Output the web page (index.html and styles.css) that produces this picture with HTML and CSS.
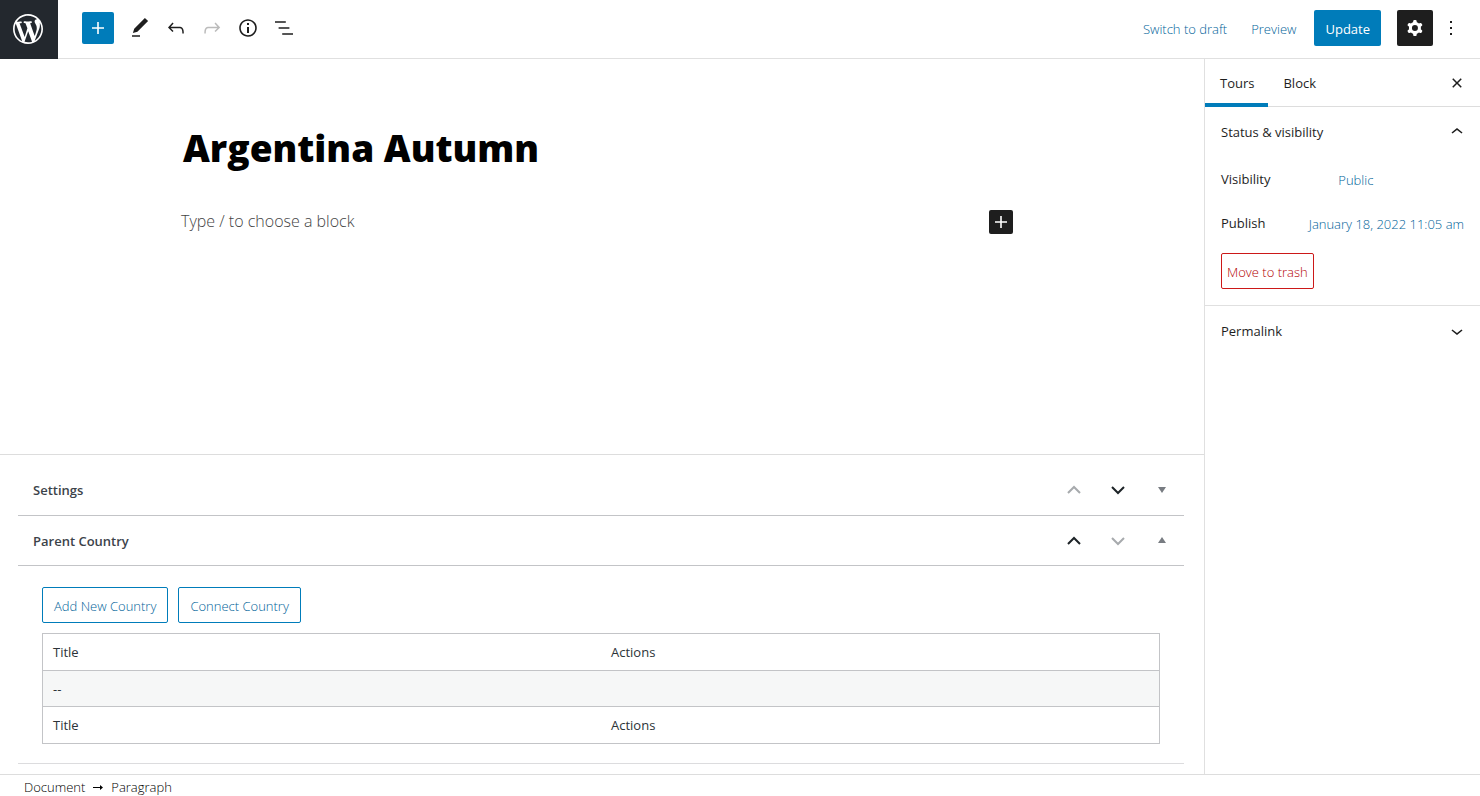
FILE: index.html
```html
<!DOCTYPE html>
<html lang="en">
<head>
  <meta charset="UTF-8">
  <meta name="viewport" content="width=device-width, initial-scale=1.0">
  <title>Edit Tour</title>
  <link rel="stylesheet" href="styles.css">
</head>
<body>
  <!-- Top toolbar -->
  <header class="header">
    <a class="logo" href="#" aria-label="View Posts">
      <svg width="36" height="36" viewBox="-2 -2 24 24"><path d="M20 10c0-5.51-4.49-10-10-10C4.48 0 0 4.49 0 10c0 5.52 4.48 10 10 10 5.51 0 10-4.48 10-10zM7.78 15.37L4.37 6.22c.55-.02 1.17-.08 1.17-.08.5-.06.44-1.13-.06-1.11 0 0-1.45.11-2.37.11-.18 0-.37 0-.58-.01C4.12 2.69 6.87 1.11 10 1.11c2.33 0 4.45.87 6.05 2.34-.68-.11-1.65.39-1.65 1.58 0 .74.45 1.36.9 2.1.35.61.55 1.36.55 2.46 0 1.49-1.4 5-1.4 5l-3.03-8.37c.54-.02.82-.17.82-.17.5-.05.44-1.25-.06-1.22 0 0-1.44.12-2.38.12-.87 0-2.33-.12-2.33-.12-.5-.03-.56 1.2-.06 1.22l.92.08 1.26 3.41zM17.41 10c.24-.64.74-1.87.43-4.25.7 1.29 1.05 2.71 1.05 4.25 0 3.29-1.73 6.24-4.4 7.78.97-2.59 1.94-5.2 2.92-7.78zM6.1 18.09C3.12 16.65 1.11 13.53 1.11 10c0-1.3.23-2.48.72-3.59C3.25 10.3 4.67 14.2 6.1 18.09zm4.03-6.63l2.58 6.98c-.86.29-1.76.45-2.71.45-.79 0-1.57-.11-2.29-.33.81-2.38 1.62-4.74 2.42-7.1z"/></svg>
    </a>
    <div class="tools">
      <button class="tool tool-add" type="button" aria-label="Add block">
        <svg width="24" height="24" viewBox="0 0 24 24"><path d="M18 11.2h-5.2V6h-1.6v5.2H6v1.6h5.2V18h1.6v-5.2H18z"/></svg>
      </button>
      <button class="tool" type="button" aria-label="Tools">
        <svg width="24" height="24" viewBox="0 0 24 24"><path d="M20.1 5.1L16.9 2 6.2 12.7l-1.3 4.4 4.5-1.3L20.1 5.1zM4 20.8h8v-1.5H4v1.5z"/></svg>
      </button>
      <button class="tool" type="button" aria-label="Undo">
        <svg width="24" height="24" viewBox="0 0 24 24"><path d="M18.3 11.7c-.6-.6-1.4-.9-2.3-.9H6.7l2.9-3.3-1.1-1-4.5 5L8.5 16l1-1-2.7-2.7H16c.5 0 .9.2 1.3.5 1 1 1 3.4 1 4.5v.3h1.5v-.2c0-1.5 0-4.3-1.5-5.7z"/></svg>
      </button>
      <button class="tool" type="button" aria-label="Redo" disabled>
        <svg width="24" height="24" viewBox="0 0 24 24"><path d="M15.6 6.5l-1.1 1 2.9 3.3H8c-.9 0-1.7.3-2.3.9-1.4 1.5-1.4 4.2-1.4 5.6v.2h1.5v-.3c0-1.1 0-3.5 1-4.5.3-.3.7-.5 1.3-.5h9.2L14.5 15l1.1 1.1 4.6-4.6-4.6-5z"/></svg>
      </button>
      <button class="tool" type="button" aria-label="Details">
        <svg width="24" height="24" viewBox="0 0 24 24"><path d="M12 3.2c-4.8 0-8.8 3.9-8.8 8.8 0 4.8 3.9 8.8 8.8 8.8 4.8 0 8.8-3.9 8.8-8.8 0-4.8-4-8.8-8.8-8.8zm0 16c-4 0-7.2-3.3-7.2-7.2C4.8 8 8 4.8 12 4.8s7.2 3.3 7.2 7.2c0 4-3.2 7.2-7.2 7.2zM11 17h2v-6h-2v6zm0-8h2V7h-2v2z"/></svg>
      </button>
      <button class="tool" type="button" aria-label="List view">
        <svg width="24" height="24" viewBox="0 0 24 24"><path d="M13.8 5.2H3v1.5h10.8V5.2zm-3.6 12v1.5H21v-1.5H10.2zm7.2-6H6.6v1.5h10.8v-1.5z"/></svg>
      </button>
    </div>
    <div class="actions">
      <button class="link-button" type="button">Switch to draft</button>
      <button class="link-button" type="button">Preview</button>
      <button class="update" type="button">Update</button>
      <button class="settings-toggle" type="button" aria-label="Settings">
        <svg width="24" height="24" viewBox="0 0 24 24"><path fill-rule="evenodd" d="M10.289 4.836A1 1 0 0111.275 4h1.306a1 1 0 01.987.836l.244 1.466c.787.26 1.503.679 2.108 1.218l1.393-.522a1 1 0 011.216.437l.653 1.13a1 1 0 01-.23 1.273l-1.148.944a6.025 6.025 0 010 2.435l1.149.946a1 1 0 01.23 1.272l-.653 1.13a1 1 0 01-1.216.437l-1.394-.522c-.605.54-1.32.958-2.108 1.218l-.244 1.466a1 1 0 01-.987.836h-1.306a1 1 0 01-.986-.836l-.244-1.466a5.995 5.995 0 01-2.108-1.218l-1.394.522a1 1 0 01-1.217-.436l-.653-1.131a1 1 0 01.23-1.272l1.149-.946a6.026 6.026 0 010-2.435l-1.148-.944a1 1 0 01-.23-1.272l.653-1.131a1 1 0 011.217-.437l1.393.522a5.994 5.994 0 012.108-1.218l.244-1.466zM14.929 12a3 3 0 11-6 0 3 3 0 016 0z"/></svg>
      </button>
      <button class="more" type="button" aria-label="Options">
        <svg width="24" height="24" viewBox="0 0 24 24"><path d="M13 19h-2v-2h2v2zm0-6h-2v-2h2v2zm0-6h-2V5h2v2z"/></svg>
      </button>
    </div>
  </header>

  <div class="body">
    <main class="content">
      <!-- Editor canvas -->
      <section class="canvas">
        <h1 class="post-title">Argentina Autumn</h1>
        <div class="block">
          <p class="placeholder">Type / to choose a block</p>
          <button class="inserter" type="button" aria-label="Add block">
            <svg width="24" height="24" viewBox="0 0 24 24"><path d="M18 11.2h-5.2V6h-1.6v5.2H6v1.6h5.2V18h1.6v-5.2H18z"/></svg>
          </button>
        </div>
      </section>

      <!-- Meta boxes -->
      <section class="metaboxes">
        <div class="postbox-header">
          <h2>Settings</h2>
          <button class="handle" type="button" aria-label="Move up" disabled>
            <svg width="20" height="20" viewBox="0 0 20 20"><path class="chevron" d="M4 13l6-6 6 6"/></svg>
          </button>
          <button class="handle" type="button" aria-label="Move down">
            <svg width="20" height="20" viewBox="0 0 20 20"><path class="chevron" d="M4 7l6 6 6-6"/></svg>
          </button>
          <button class="handle handle-toggle" type="button" aria-label="Toggle panel: Settings">
            <svg width="20" height="20" viewBox="0 0 20 20"><path d="M6 7h8l-4 6z"/></svg>
          </button>
        </div>
        <div class="postbox-header">
          <h2>Parent Country</h2>
          <button class="handle" type="button" aria-label="Move up">
            <svg width="20" height="20" viewBox="0 0 20 20"><path class="chevron" d="M4 13l6-6 6 6"/></svg>
          </button>
          <button class="handle" type="button" aria-label="Move down" disabled>
            <svg width="20" height="20" viewBox="0 0 20 20"><path class="chevron" d="M4 7l6 6 6-6"/></svg>
          </button>
          <button class="handle handle-toggle" type="button" aria-label="Toggle panel: Parent Country">
            <svg width="20" height="20" viewBox="0 0 20 20"><path d="M6 12h8l-4-6z"/></svg>
          </button>
        </div>
        <div class="postbox-inside">
          <div class="relation-buttons">
            <button class="outline-button" type="button">Add New Country</button>
            <button class="outline-button" type="button">Connect Country</button>
          </div>
          <table class="relation-table">
            <thead>
              <tr><th scope="col">Title</th><th scope="col">Actions</th></tr>
            </thead>
            <tbody>
              <tr><td colspan="2">--</td></tr>
            </tbody>
            <tfoot>
              <tr><th scope="col">Title</th><th scope="col">Actions</th></tr>
            </tfoot>
          </table>
        </div>
      </section>
    </main>

    <!-- Settings sidebar -->
    <aside class="sidebar">
      <div class="tabs">
        <button class="tab active" type="button">Tours</button>
        <button class="tab" type="button">Block</button>
        <button class="close" type="button" aria-label="Close settings">
          <svg width="24" height="24" viewBox="0 0 24 24"><path d="M12 13.06l3.712 3.713 1.061-1.06L13.061 12l3.712-3.712-1.06-1.06L12 10.938 8.288 7.227l-1.061 1.06L10.939 12l-3.712 3.712 1.06 1.061L12 13.061z"/></svg>
        </button>
      </div>
      <section class="panel">
        <button class="panel-toggle" type="button" aria-expanded="true">
          Status &amp; visibility
          <svg width="24" height="24" viewBox="0 0 24 24"><path d="M6.5 12.4L12 8l5.5 4.4-.9 1.2L12 10l-4.5 3.6-1-1.2z"/></svg>
        </button>
        <div class="panel-body">
          <div class="panel-row">
            <label for="visibility">Visibility</label>
            <button class="value" id="visibility" type="button">Public</button>
          </div>
          <div class="panel-row">
            <label for="publish">Publish</label>
            <button class="value" id="publish" type="button">January 18, 2022 11:05 am</button>
          </div>
          <button class="trash" type="button">Move to trash</button>
        </div>
      </section>
      <section class="panel">
        <button class="panel-toggle" type="button" aria-expanded="false">
          Permalink
          <svg width="24" height="24" viewBox="0 0 24 24"><path d="M17.5 11.6L12 16l-5.5-4.4.9-1.2L12 14l4.5-3.6 1 1.2z"/></svg>
        </button>
      </section>
    </aside>
  </div>

  <!-- Block breadcrumb -->
  <footer class="footer">
    <a href="#">Document</a>
    <svg width="10" height="8" viewBox="0 0 10 8"><path d="M0 4h7V2l3 2.5L7 7V5H0z"/></svg>
    <span>Paragraph</span>
  </footer>
</body>
</html>
```
FILE: styles.css
```css
* {
  box-sizing: border-box;
}

body {
  display: flex;
  flex-direction: column;
  height: 100vh;
  margin: 0;
  overflow: hidden;
  background: #fff;
  color: #1e1e1e;
  font-family: "Segoe UI", "Open Sans", "Noto Sans", sans-serif;
  font-size: 13px;
  line-height: 18px;
}

button {
  margin: 0;
  padding: 0;
  border: none;
  border-radius: 2px;
  background: none;
  color: inherit;
  font: inherit;
  white-space: nowrap;
  cursor: pointer;
}

svg {
  display: block;
  flex-shrink: 0;
  fill: currentColor;
}

/* Toolbar */
.header {
  display: flex;
  flex-shrink: 0;
  border-bottom: 1px solid #e0e0e0;
}

.logo {
  display: flex;
  align-items: center;
  padding: 11px 12px 12px 10px;
  margin-bottom: -1px;
  background: #23282e;
  color: #fff;
}

.tools {
  display: flex;
  align-items: center;
  gap: 4px;
  flex: 1;
  padding: 0 0 2px 24px;
}

.tool {
  display: grid;
  place-items: center;
  width: 32px;
  height: 32px;
}

.tool:disabled {
  color: #bbb;
}

.tool-add {
  margin-right: 6px;
  background: #007cba;
  color: #fff;
}

.actions {
  display: flex;
  align-items: center;
  padding: 0 17px 2px 0;
}

.link-button {
  height: 36px;
  padding: 2px 0 0;
  margin-right: 24px;
  color: #006399;
  font-weight: 300;
}

.link-button + .update {
  margin-left: -6px;
}

.update {
  height: 36px;
  padding: 2px 11px 0;
  margin-right: 16px;
  background: #007cba;
  color: #fff;
}

.settings-toggle {
  display: grid;
  place-items: center;
  width: 36px;
  height: 36px;
  margin-right: 6px;
  background: #1e1e1e;
  color: #fff;
}

/* Main area */
.body {
  display: flex;
  flex: 1;
  min-height: 0;
}

.content {
  display: flex;
  flex-direction: column;
  flex: 1;
  min-width: 0;
}

.canvas {
  flex: 1;
  padding: 60px 181px 0;
}

.post-title {
  margin: 0 0 33px;
  padding-left: 2px;
  color: #000;
  font-size: 37px;
  font-weight: 800;
  line-height: 58px;
}

.block {
  display: flex;
  align-items: center;
  justify-content: space-between;
  padding-right: 10px;
}

.placeholder {
  margin: 0;
  padding-bottom: 2px;
  color: #444;
  font-size: 16px;
  font-weight: 300;
  line-height: 22px;
}

.inserter {
  width: 24px;
  height: 24px;
  background: #1e1e1e;
  color: #fff;
}

/* Meta boxes */
.metaboxes {
  padding: 10px 20px 10px 18px;
  border-top: 1px solid #ddd;
}

.postbox-header {
  display: flex;
  align-items: center;
  gap: 24px;
  height: 50px;
  padding: 0 12px 0 15px;
  border-bottom: 1px solid #c3c4c7;
}

.postbox-header:first-child {
  height: 51px;
}

.postbox-header h2 {
  flex: 1;
  margin: 0;
  color: #3c434a;
  font-size: 13px;
  font-weight: 600;
}

.handle {
  color: #1d2327;
}

.handle:disabled {
  color: #a7aaad;
}

.handle-toggle {
  color: #787c82;
}

.chevron {
  fill: none;
  stroke: currentColor;
  stroke-width: 2;
}

.postbox-inside {
  padding: 21px 24px 19px;
  border-bottom: 1px solid #dcdcde;
}

.relation-buttons {
  display: flex;
  gap: 10px;
  margin-bottom: 10px;
}

.outline-button {
  height: 36px;
  padding: 2px 11px 0;
  border: 1px solid #007cba;
  color: #006399;
  font-weight: 300;
}

.relation-table {
  width: 100%;
  border: 1px solid #c3c4c7;
  border-collapse: collapse;
  table-layout: fixed;
  color: #2c3338;
}

.relation-table th,
.relation-table td {
  height: 37px;
  padding: 0 10px;
  border-bottom: 1px solid #c3c4c7;
  font-weight: 400;
  text-align: left;
}

.relation-table td {
  height: 36px;
  background: #f6f7f7;
}

/* Sidebar */
.sidebar {
  flex: 0 0 276px;
  border-left: 1px solid #e0e0e0;
}

.tabs {
  display: flex;
  height: 48px;
  border-bottom: 1px solid #ddd;
}

.tab {
  margin-bottom: -1px;
  padding: 4px 14px 0 15px;
  border-bottom: 4px solid transparent;
  border-radius: 0;
  font-weight: 500;
}

.tab.active {
  border-bottom-color: #007cba;
}

.close {
  margin: 0 11px 0 auto;
}

.panel + .panel {
  border-top: 1px solid #e0e0e0;
}

.panel-toggle {
  display: flex;
  align-items: center;
  justify-content: space-between;
  width: 100%;
  height: 50px;
  padding: 0 11px 0 16px;
  font-weight: 500;
}

.panel-body {
  padding: 4px 16px 16px;
}

.panel-row {
  display: flex;
  align-items: center;
  height: 36px;
  margin-bottom: 8px;
}

.panel-row label {
  flex: 0 1 45%;
}

.panel-row + .panel-row {
  margin-bottom: 12px;
}

.value {
  padding: 2px 0 0 8px;
  color: #006399;
  font-weight: 300;
}

.trash {
  display: block;
  height: 36px;
  padding: 2px 5px 0;
  border: 1px solid #cc1818;
  color: #b30000;
  font-weight: 300;
}

/* Footer */
.footer {
  display: flex;
  align-items: center;
  flex-shrink: 0;
  gap: 8px;
  height: 22px;
  padding: 3px 24px 0;
  border-top: 1px solid #ddd;
  color: #000;
  font-weight: 300;
}

.footer a {
  color: inherit;
  text-decoration: none;
}
```
